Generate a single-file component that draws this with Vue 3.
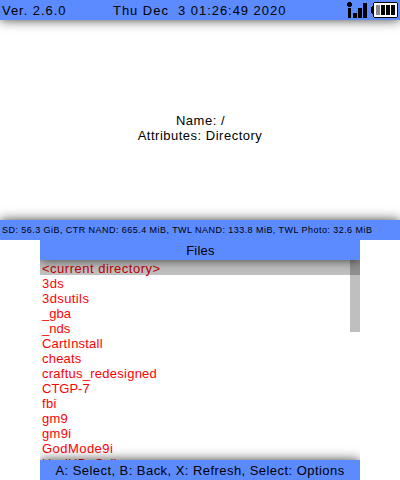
<script setup>
const files = [
  { name: '<current directory>', gap: 0.5 },
  { name: '3ds', gap: 0.4 },
  { name: '3dsutils', gap: 0.4 },
  { name: '_gba', gap: 0 },
  { name: '_nds', gap: 0 },
  { name: 'CartInstall', gap: 0.2 },
  { name: 'cheats', gap: 0.2 },
  { name: 'craftus_redesigned', gap: 0.25 },
  { name: 'CTGP-7', gap: 0 },
  { name: 'fbi', gap: 0.3 },
  { name: 'gm9', gap: 0.2 },
  { name: 'gm9i', gap: 0.3 },
  { name: 'GodMode9i', gap: 0.45 },
  { name: 'HaxiHD_Gsll', gap: 0 },
]
</script>

<template>
  <div class="device">
    <section class="top-screen">
      <header class="bar status">
        <span class="version">Ver. 2.6.0</span>
        <span class="clock">Thu Dec&nbsp; 3 01:26:49 2020</span>
        <svg class="indicators" width="54" height="20" viewBox="0 0 54 20" shape-rendering="crispEdges">
          <path d="M2 2h3v1h1v3h-1v1h-3v-1h-1v-3h1zM2 8h3v10h-3zM7 13h4v5h-4zM12 8h4v10h-4zM17 3h4v15h-4z" />
          <path d="M28 2h23v1h1v14h-1v1h-23v-1h-1v-3h-1v-1h-1v-6h1v-1h1v-3h1z" />
          <path fill="#fff" d="M28 3h23v14h-23z" />
          <path d="M30 5h19v10h-19z" />
          <path fill="#888" d="M30 5h4v10h-4z" />
          <path fill="#fff" d="M34 5h1v10h-1zM39 5h1v10h-1zM44 5h1v10h-1z" />
        </svg>
      </header>
      <div class="details">
        <span class="name">Name: /</span>
        <span class="attributes">Attributes: Directory</span>
      </div>
      <footer class="bar storage"><span>SD: 56.3 GiB, CTR NAND: 665.4 MiB, TWL NAND: 133.8 MiB, TWL Photo: 32.6 MiB</span></footer>
    </section>
    <section class="bottom-screen">
      <header class="bar heading"><span>Files</span></header>
      <div class="browser">
        <ul>
          <li v-for="(file, i) in files" :key="file.name" :class="{ selected: i === 0 }">
            <span :style="{ letterSpacing: file.gap + 'px' }">{{ file.name }}</span>
          </li>
        </ul>
        <div class="thumb"></div>
      </div>
      <footer class="bar controls"><span>A: Select, B: Back, X: Refresh, Select: Options</span></footer>
    </section>
  </div>
</template>

<style>
body { margin: 0; background: #fff; }
</style>

<style scoped>
.device { width: 400px; height: 480px; overflow: hidden; font: 13px/15px "Liberation Sans", Arial, sans-serif; color: #000; }
.top-screen { height: 240px; display: flex; flex-direction: column; overflow: hidden; }
.bar { height: 20px; flex: none; box-sizing: border-box; display: flex; align-items: center; background: #5c8aff; position: relative; z-index: 1; box-shadow: 0 0 12px rgba(0, 0, 0, .75); white-space: pre; }
.status { padding: 1px 0 0 2px; }
.version { width: 111px; letter-spacing: .95px; }
.clock { width: 233px; letter-spacing: .96px; }
.indicators { margin-top: -1px; flex: none; }
.details { flex: 1; display: flex; flex-direction: column; align-items: center; justify-content: center; padding-top: 15px; }
.name { letter-spacing: .5px; padding-left: 1px; }
.attributes { letter-spacing: .5px; }
.storage { font-size: 9px; padding: 1px 0 0 2px; letter-spacing: .45px; }
.bottom-screen { width: 320px; height: 240px; margin: 0 auto; display: flex; flex-direction: column; overflow: hidden; }
.heading, .controls { justify-content: center; padding-top: 1px; }
.heading { letter-spacing: .25px; padding-left: 1px; }
.controls { letter-spacing: .45px; }
.browser { height: 200px; position: relative; overflow: hidden; }
ul { list-style: none; margin: 0; padding: 0; }
li { height: 15px; padding: 1px 0 0 2px; box-sizing: border-box; color: #f00; white-space: pre; line-height: 15px; }
li.selected { background: #c0c0c0; color: #c00000; }
.thumb { position: absolute; right: 0; top: 0; width: 10px; height: 72px; background: rgba(0, 0, 0, .25); }
</style>
